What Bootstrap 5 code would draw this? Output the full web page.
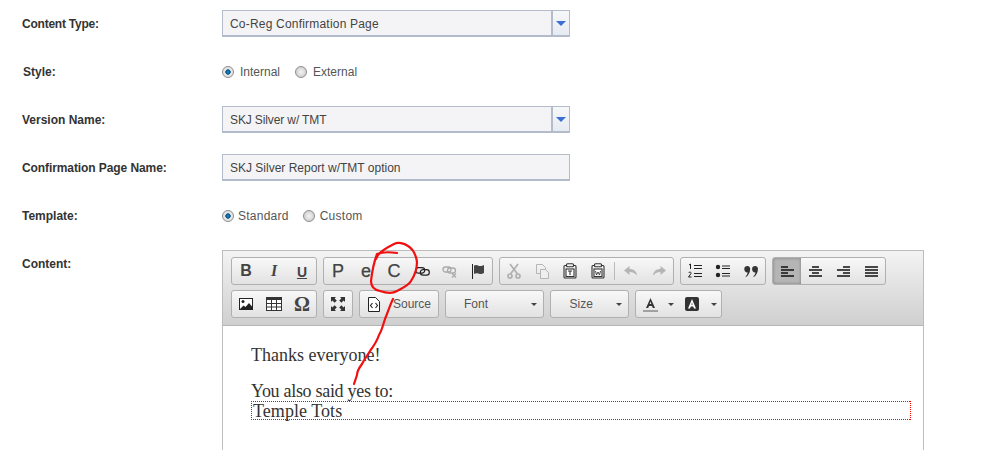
<!DOCTYPE html>
<html lang="en">
<head>
<meta charset="utf-8">
<title>Content form</title>
<link rel="stylesheet" href="https://cdn.jsdelivr.net/npm/bootstrap@5.3.0/dist/css/bootstrap.min.css">
<style>
html,body{height:450px;background:#fff}
body{font-family:"Liberation Sans",Arial,sans-serif;font-size:12px;color:#444}
.cms-form{padding:10px 0 0 22px;position:relative;display:flex;flex-direction:column;gap:21px}
.cms-row{display:flex;min-height:27px;align-items:center}
.cms-row.top{align-items:flex-start}
.cms-label{width:200px;flex:none;font-weight:700;color:#333;line-height:25px;padding-top:2px}
.lab-style{padding-left:1px}
.tight1{letter-spacing:-.23px}
.tight2{letter-spacing:-.09px}
.wide1{letter-spacing:.2px}
.wide2{letter-spacing:.25px}
.tight3{letter-spacing:-.12px}
.cms-field{width:348px;height:27px;border:1px solid #b4bccb;border-bottom-width:2px;background:#f4f4f6;color:#444;display:flex;font-size:12px;line-height:26px;padding:0}
.cms-field>span:first-child{flex:1;padding-left:7px}
input.cms-field{padding:2px 7px 0;border-radius:0;box-shadow:none}
.cms-drop{width:18px;border-left:2px solid #b4bccb;background:linear-gradient(#f6f7f9,#e6ebf2);display:flex;align-items:center;justify-content:center}
.cms-drop i{border-style:solid;border-color:#3a6fd8 transparent transparent;border-width:5px 5px 0}
.cms-radios{display:flex;align-items:center;color:#555}
.cms-radio{appearance:none;-webkit-appearance:none;width:12px;height:12px;border-radius:50%;border:1px solid #8e8e8e;background:radial-gradient(circle,#f4f4f4,#c4c4c4);margin:0;flex:none}
.cms-radio:checked{background:radial-gradient(circle,#1c8fc8 0,#0a4f80 34%,#ececec 42%,#d4d4d4 100%)}
.i1{margin-right:6px}.t1{margin-right:15px}.i2{margin-right:4px}.t2{margin-right:14px}.i3{margin-right:5px}
.cms-editor{width:702px;height:260px;border:1px solid #bdbdbd;border-bottom:0;background:#fff;overflow:hidden;flex:none}
.cms-tools{height:75px;background:linear-gradient(#f3f3f3,#cfcfcf);border-bottom:1px solid #b6b6b6;padding:6px 0 0 8px;width:100%}
.tool-line{display:flex;gap:6px;margin-bottom:5px}
.tool-group{display:flex;height:28px;border:1px solid #b0b0b0;border-radius:3px;background:linear-gradient(#f8f8f8,#e2e2e2);align-items:center;flex:none}
.tool-btn{width:28px;height:26px;display:flex;align-items:center;justify-content:center;color:#444;font-size:16px;line-height:1;flex:none}
.tool-btn svg{display:block}
.tool-btn.on{background:#b5b5b5;box-shadow:inset 0 0 3px #777;border-radius:2px 0 0 2px}
.tool-big{font-size:18px;-webkit-text-stroke:.25px #444}
.tool-under{font-size:14px;border:0;padding-top:2px}
.tool-omega{font-size:20px;font-weight:700}
.tool-sep{width:1px;height:18px;background:#bbb;margin:0 2px;flex:none}
.tool-combo{font-size:12px;color:#555;display:flex;align-items:center;height:26px}
.caret-s{display:inline-block;border-style:solid;border-color:#444 transparent transparent;border-width:3px 3.5px 0}
.g-font{width:96.5px;padding:0 6px 0 18px;justify-content:space-between}
.g-size{width:77px;padding:0 6px 0 19px;justify-content:space-between}
.g-src{width:78px;padding-left:8px;gap:13px}
.w-a1{width:29px}.w-c1{width:12px}.w-a2{width:31px}.w-c2{width:13px}
.g-color{width:87.500px}
.cms-body{font-family:"Liberation Serif",serif;font-size:18px;line-height:20px;color:#333;padding:19px 12px 0 28px}
.cms-body p{margin:0 0 16px}
.cms-said{letter-spacing:-.3px;height:20px;line-height:20px}
.cms-pick{height:19px;line-height:20px;padding-left:2px;letter-spacing:.05px;
  background:
   repeating-linear-gradient(90deg,#f00 0 1px,transparent 1px 2px) top/100% 1px no-repeat,
   repeating-linear-gradient(90deg,#f00 0 1px,transparent 1px 2px) bottom/100% 1px no-repeat,
   repeating-linear-gradient(0deg,#f00 0 1px,transparent 1px 2px) left/1px 100% no-repeat,
   repeating-linear-gradient(0deg,#f00 0 1px,transparent 1px 2px) right/1px 100% no-repeat}
.ink{position:absolute;left:0;top:0;pointer-events:none}
.ser{font-family:"Liberation Serif",serif}
</style>
</head>
<body class="overflow-hidden m-0">
<form class="cms-form">
  <div class="cms-row"><div class="cms-label tight1">Content Type:</div><div class="cms-field"><span class="wide1">Co-Reg Confirmation Page</span><span class="cms-drop"><i></i></span></div></div>
  <div class="cms-row"><div class="cms-label lab-style">Style:</div><div class="cms-radios"><input class="cms-radio i1" type="radio" name="s" checked><span class="t1">Internal</span><input class="cms-radio i1" type="radio" name="s"><span>External</span></div></div>
  <div class="cms-row"><div class="cms-label">Version Name:</div><div class="cms-field"><span class="tight3">SKJ Silver w/ TMT</span><span class="cms-drop"><i></i></span></div></div>
  <div class="cms-row"><div class="cms-label tight2">Confirmation Page Name:</div><input class="cms-field" type="text" value="SKJ Silver Report w/TMT option"></div>
  <div class="cms-row"><div class="cms-label">Template:</div><div class="cms-radios"><input class="cms-radio i2" type="radio" name="t" checked><span class="t2 wide2">Standard</span><input class="cms-radio i3" type="radio" name="t"><span class="wide2">Custom</span></div></div>
  <div class="cms-row top"><div class="cms-label">Content:</div>
    <div class="cms-editor">
      <div class="cms-tools">
        <div class="tool-line">
        <div class="tool-group">
          <span class="tool-btn fw-bold">B</span>
          <span class="tool-btn ser fw-bold fst-italic">I</span>
          <span class="tool-btn fw-bold text-decoration-underline tool-under">U</span>
        </div>
        <div class="tool-group">
          <span class="tool-btn tool-big">P</span><span class="tool-btn tool-big">e</span><span class="tool-btn tool-big">C</span>
          <span class="tool-btn"><svg width="15" height="9" viewBox="0 0 15 9" fill="none" stroke="#222" stroke-width="1.200"><rect x=".7" y=".7" width="9" height="5.500" rx="2.700"/><rect x="5.300" y="2.600" width="9" height="5.500" rx="2.700"/></svg></span>
          <span class="tool-btn"><svg width="16" height="16" viewBox="0 0 16 16" fill="none" stroke="#aaa" stroke-width="1.300"><rect x="1" y="4" width="8" height="5" rx="2.500"/><rect x="5.500" y="5" width="8" height="5" rx="2.500"/><path d="M10 10.500l4 4M14 10.500l-4 4"/></svg></span>
          <span class="tool-btn"><svg width="14" height="15" viewBox="0 0 14 15"><path d="M1.500 0v15" stroke="#222" stroke-width="1"/><path d="M3 1.500c3-1.500 4 .5 6 .5s3-.5 4-1v8c-1 .5-2 1-4 1s-3-1.500-6 0z" fill="#444"/></svg></span>
        </div>
        <div class="tool-group">
          <span class="tool-btn"><svg width="16" height="16" viewBox="0 0 16 16" fill="none" stroke="#b0b0b0" stroke-width="1.700"><path d="M4 1l7.500 10M12 1L4.500 11"/><circle cx="4" cy="13" r="2"/><circle cx="12" cy="13" r="2"/></svg></span>
          <span class="tool-btn"><svg width="14" height="15" viewBox="0 0 14 15" fill="none" stroke="#b5b5b5"><path d="M1.500.5h6l3 3v6h-9z"/><path d="M5.500 5.500h5l3 3v6h-8z" fill="#eee"/></svg></span>
          <span class="tool-btn"><svg width="14" height="16" viewBox="0 0 14 16" fill="none" stroke="#333" stroke-width="1.100"><path d="M3.500 2.500H2c-.8 0-1 .5-1 1V14c0 .6.4 1 1 1h10c.6 0 1-.4 1-1V3.500c0-.5-.2-1-1-1h-1.500"/><rect x="3.500" y=".7" width="7" height="3" rx="1"/><rect x="3" y="6" width="8" height="7.500" fill="#fff"/><path d="M5 8h4M7 8v4"/></svg></span>
          <span class="tool-btn"><svg width="14" height="16" viewBox="0 0 14 16" fill="none" stroke="#333" stroke-width="1.100"><path d="M3.500 2.500H2c-.8 0-1 .5-1 1V14c0 .6.4 1 1 1h10c.6 0 1-.4 1-1V3.500c0-.5-.2-1-1-1h-1.500"/><rect x="3.500" y=".7" width="7" height="3" rx="1"/><rect x="3" y="6" width="8" height="7.500" fill="#fff"/><path d="M4.500 8l1 4 1.500-3 1.500 3 1-4" stroke-width=".9"/></svg></span>
          <span class="tool-sep"></span>
          <span class="tool-btn"><svg width="16" height="12" viewBox="0 0 16 12"><path d="M6.500 1L1 5.500 6.500 10V7c3 0 5 1 7.500 3.500C13.500 6 10.500 4 6.500 4z" fill="#b5b5b5"/></svg></span>
          <span class="tool-btn"><svg width="16" height="12" viewBox="0 0 16 12"><path d="M9.500 1L15 5.500 9.500 10V7c-3 0-5 1-7.500 3.500C2.500 6 5.500 4 9.500 4z" fill="#b5b5b5"/></svg></span>
        </div>
        <div class="tool-group">
          <span class="tool-btn"><svg width="16" height="16" viewBox="0 0 16 16" stroke="#222" fill="none"><path d="M7 2.500h8M7 5.500h8M7 10.500h8M7 13.500h8" stroke-width="1.100"/><path d="M2 2l1.500-1v5" stroke-width="1"/><path d="M1.500 10c1-1.500 3-1 2.500.5L1.500 14H4.500" stroke-width="1"/></svg></span>
          <span class="tool-btn"><svg width="16" height="14" viewBox="0 0 16 14"><circle cx="3" cy="3" r="2.200" fill="#222"/><circle cx="3" cy="11" r="2.200" fill="#222"/><path d="M7 2h8M7 4.500h8M7 9.500h8M7 12h8" stroke="#222" stroke-width="1.100"/></svg></span>
          <span class="tool-btn"><svg width="15" height="11" viewBox="0 0 16 12" fill="#333"><path d="M3.500 0a3 3 0 0 1 3 3.500C6.500 7 4.500 10.500 2 12l-.5-.8C3 9.800 3.700 8.500 3.800 7A3.500 3.500 0 0 1 3.500 0z"/><path d="M12 0a3 3 0 0 1 3 3.500C15 7 13 10.500 10.500 12l-.5-.8c1.500-1.400 2.200-2.700 2.300-4.200A3.500 3.500 0 0 1 12 0z"/></svg></span>
        </div>
        <div class="tool-group">
          <span class="tool-btn on"><svg width="13" height="11" viewBox="0 0 13 11" fill="none" stroke="#111" stroke-width="1.700"><path d="M0 1h7M0 4h13M0 7h7M0 10h13"/></svg></span>
          <span class="tool-btn"><svg width="13" height="11" viewBox="0 0 13 11" fill="none" stroke="#111" stroke-width="1.700"><path d="M3 1h7M0 4h13M3 7h7M0 10h13"/></svg></span>
          <span class="tool-btn"><svg width="13" height="11" viewBox="0 0 13 11" fill="none" stroke="#111" stroke-width="1.700"><path d="M6 1h7M0 4h13M6 7h7M0 10h13"/></svg></span>
          <span class="tool-btn"><svg width="13" height="11" viewBox="0 0 13 11" fill="none" stroke="#111" stroke-width="1.700"><path d="M0 1h13M0 4h13M0 7h13M0 10h13"/></svg></span>
        </div>
        </div>
        <div class="tool-line">
        <div class="tool-group">
          <span class="tool-btn"><svg width="14" height="12" viewBox="0 0 14 12"><rect x=".5" y=".5" width="13" height="11" fill="#fff" stroke="#222"/><circle cx="4" cy="3.500" r="1.500" fill="#222"/><path d="M1 11l3.500-3.500 2 1.500 3.500-4 3 3.500V11z" fill="#222"/></svg></span>
          <span class="tool-btn"><svg width="16" height="14" viewBox="0 0 16 14" fill="none" stroke="#333"><rect x=".5" y=".5" width="15" height="13" fill="#fff"/><path d="M0 1.500h16" stroke-width="3"/><path d="M.5 6.500h15M.5 10h15M5.500 3v10M10.500 3v10"/></svg></span>
          <span class="tool-btn ser tool-omega">Ω</span>
        </div>
        <div class="tool-group">
          <span class="tool-btn"><svg width="14" height="14" viewBox="0 0 14 14" fill="#333"><path d="M0 0h5L3.600 1.400 5.800 3.600 3.600 5.800 1.400 3.600 0 5zM14 0v5l-1.400-1.400-2.200 2.200-2.200-2.200 2.200-2.200L9 0zM0 14V9l1.400 1.400 2.200-2.200 2.200 2.200-2.200 2.200L5 14zM14 14H9l1.400-1.400-2.200-2.200 2.200-2.200 2.200 2.200L14 9z"/></svg></span>
        </div>
        <div class="tool-group">
          <span class="tool-combo g-src"><svg width="12" height="15" viewBox="0 0 12 15" fill="none"><path d="M.5.500h7l4 4v10H.5z" fill="#fff" stroke="#222"/><path d="M4.500 6L2.500 8.500l2 2.500M7.500 6l2 2.500-2 2.500" stroke="#222" stroke-width="1.100"/></svg>Source</span>
        </div>
        <div class="tool-group"><span class="tool-combo g-font">Font<i class="caret-s"></i></span></div>
        <div class="tool-group"><span class="tool-combo g-size">Size<i class="caret-s"></i></span></div>
        <div class="tool-group g-color">
          <span class="tool-combo justify-content-center w-a1"><svg width="15" height="15" viewBox="0 0 15 15"><path d="M7.500 1L3 11h2.200l.8-2h3l.8 2H12zM6.700 7l.8-2.500.8 2.500z" fill="#333"/><path d="M0 14h15" stroke="#888" stroke-width="1.500"/></svg></span>
          <span class="tool-combo justify-content-center w-c1"><i class="caret-s"></i></span>
          <span class="tool-combo justify-content-center w-a2"><svg width="14" height="14" viewBox="0 0 14 14"><rect width="14" height="14" rx="2" fill="#333"/><path d="M7 2L3 11.500h2l.8-2h2.400l.8 2h2zM6.400 7.800L7 5.500l.6 2.300z" fill="#fff"/></svg></span>
          <span class="tool-combo justify-content-center w-c2"><i class="caret-s"></i></span>
        </div>
        </div>
      </div>
      <div class="cms-body">
        <p>Thanks everyone!</p>
        <div class="cms-said">You also said yes to:</div>
        <div class="cms-pick">Temple Tots</div>
      </div>
    </div>
  </div>
</form>
<svg class="ink" width="987" height="450" viewBox="0 0 987 450" fill="none" stroke="#f01010" stroke-width="2.200" stroke-linecap="round" stroke-linejoin="round">
  <path d="M397 253C390 252 382 252 377 254C374 262 372 272 371 281C371 287 374 290 380 291C386 293 392 294 397 291C403 288 409 285 411 281C415 275 417 268 417 262C416 255 413 249 408 246C404 243 398 242 394 244C388 247 382 250 378 255L376 259"/>
  <path d="M393 299C390 305 388 312 385 319C383 325 382 330 379 335C377 341 373 347 370 351C367 356 364 360 362 364C359 368 357 371 357 375C356 378 355 381 354 384"/>
</svg>
<script src="https://cdn.jsdelivr.net/npm/bootstrap@5.3.0/dist/js/bootstrap.bundle.min.js"></script>
</body>
</html>
